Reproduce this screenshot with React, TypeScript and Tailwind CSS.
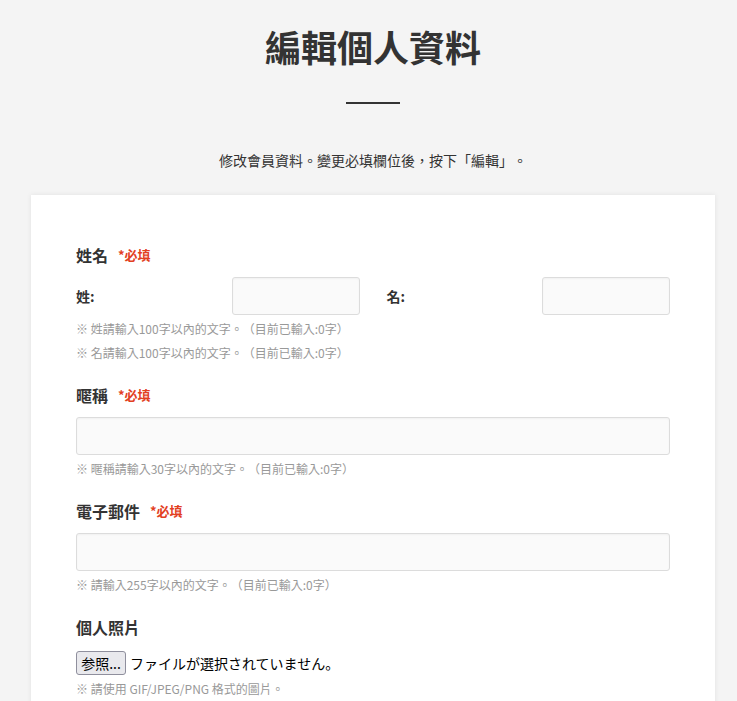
import React from "react";

const font = { fontFamily: '"Noto Sans CJK TC", "Noto Sans CJK JP", "Liberation Sans", sans-serif' };

function Required() {
  return <span className="ml-[10px] text-[13px] font-bold text-[#e2401f]">*必填</span>;
}

function Heading({ children, required }: { children: React.ReactNode; required?: boolean }) {
  return (
    <div className="flex items-center h-[24px] leading-[24px]">
      <span className="text-[16px] font-bold text-[#333]">{children}</span>
      {required && <Required />}
    </div>
  );
}

function Help({ children }: { children: React.ReactNode }) {
  return <div className="text-[12px] leading-[24px] text-[#999] whitespace-nowrap">{children}</div>;
}

function TextInput({ className = "" }: { className?: string }) {
  return (
    <input
      type="text"
      className={
        "h-[38px] rounded-[3px] border border-[#dcdcdc] bg-[#fafafa] shadow-[inset_0_1px_2px_rgba(0,0,0,0.04)] outline-none " +
        className
      }
    />
  );
}

export default function App() {
  return (
    <div className="min-h-[701px] bg-[#f4f4f4] text-[#333] [text-spacing-trim:space-all]" style={font}>
      <div className="ml-[31px] w-[684px] pt-[25px] flex flex-col items-center">
        <h1 className="text-[36px] leading-[43px] font-bold text-[#333]">編輯個人資料</h1>
        <div className="mt-[34px] h-[2px] w-[54px] bg-[#333]" />
        <p className="mt-[46px] text-[14px] leading-[20px] text-[#333]">
          修改會員資料。變更必填欄位後，按下「編輯」。
        </p>
        <div className="mt-[25px] w-full bg-white shadow-[0_0_5px_rgba(0,0,0,0.08)] px-[45px] pt-[48px] pb-[40px]">
          {/* 姓名 */}
          <div className="mb-[18px]">
            <Heading required>姓名</Heading>
            <div className="mt-[10px] grid grid-cols-2 gap-x-[27px]">
              <div className="flex items-center justify-between">
                <span className="text-[14px] font-bold">姓:</span>
                <TextInput className="w-[128px]" />
              </div>
              <div className="flex items-center justify-between">
                <span className="text-[14px] font-bold">名:</span>
                <TextInput className="w-[128px]" />
              </div>
            </div>
            <div className="mt-[2px]">
              <Help>※ 姓請輸入100字以內的文字。（目前已輸入:0字）</Help>
              <Help>※ 名請輸入100字以內的文字。（目前已輸入:0字）</Help>
            </div>
          </div>

          {/* 暱稱 */}
          <div className="mb-[18px]">
            <Heading required>暱稱</Heading>
            <TextInput className="mt-[10px] w-full block" />
            <div className="mt-[2px]">
              <Help>※ 暱稱請輸入30字以內的文字。（目前已輸入:0字）</Help>
            </div>
          </div>

          {/* 電子郵件 */}
          <div className="mb-[18px]">
            <Heading required>電子郵件</Heading>
            <TextInput className="mt-[10px] w-full block" />
            <div className="mt-[2px]">
              <Help>※ 請輸入255字以內的文字。（目前已輸入:0字）</Help>
            </div>
          </div>

          {/* 個人照片 */}
          <div>
            <Heading>個人照片</Heading>
            <div className="mt-[12px] flex items-center h-[24px]">
              <span
                className="inline-flex items-center justify-center h-[24px] w-[50px] rounded-[3px] border border-[#8f8f9d] bg-[#e9e9ed] text-[14px] text-black"
                style={{ fontFamily: '"Noto Sans CJK JP", sans-serif' }}
              >
                参照...
              </span>
              <span
                className="ml-[4px] text-[14px] text-black"
                style={{ fontFamily: '"Noto Sans CJK JP", sans-serif' }}
              >
                ファイルが選択されていません。
              </span>
            </div>
            <div className="mt-[2px]">
              <Help>※ 請使用 GIF/JPEG/PNG 格式的圖片。</Help>
            </div>
          </div>
        </div>
      </div>
    </div>
  );
}
